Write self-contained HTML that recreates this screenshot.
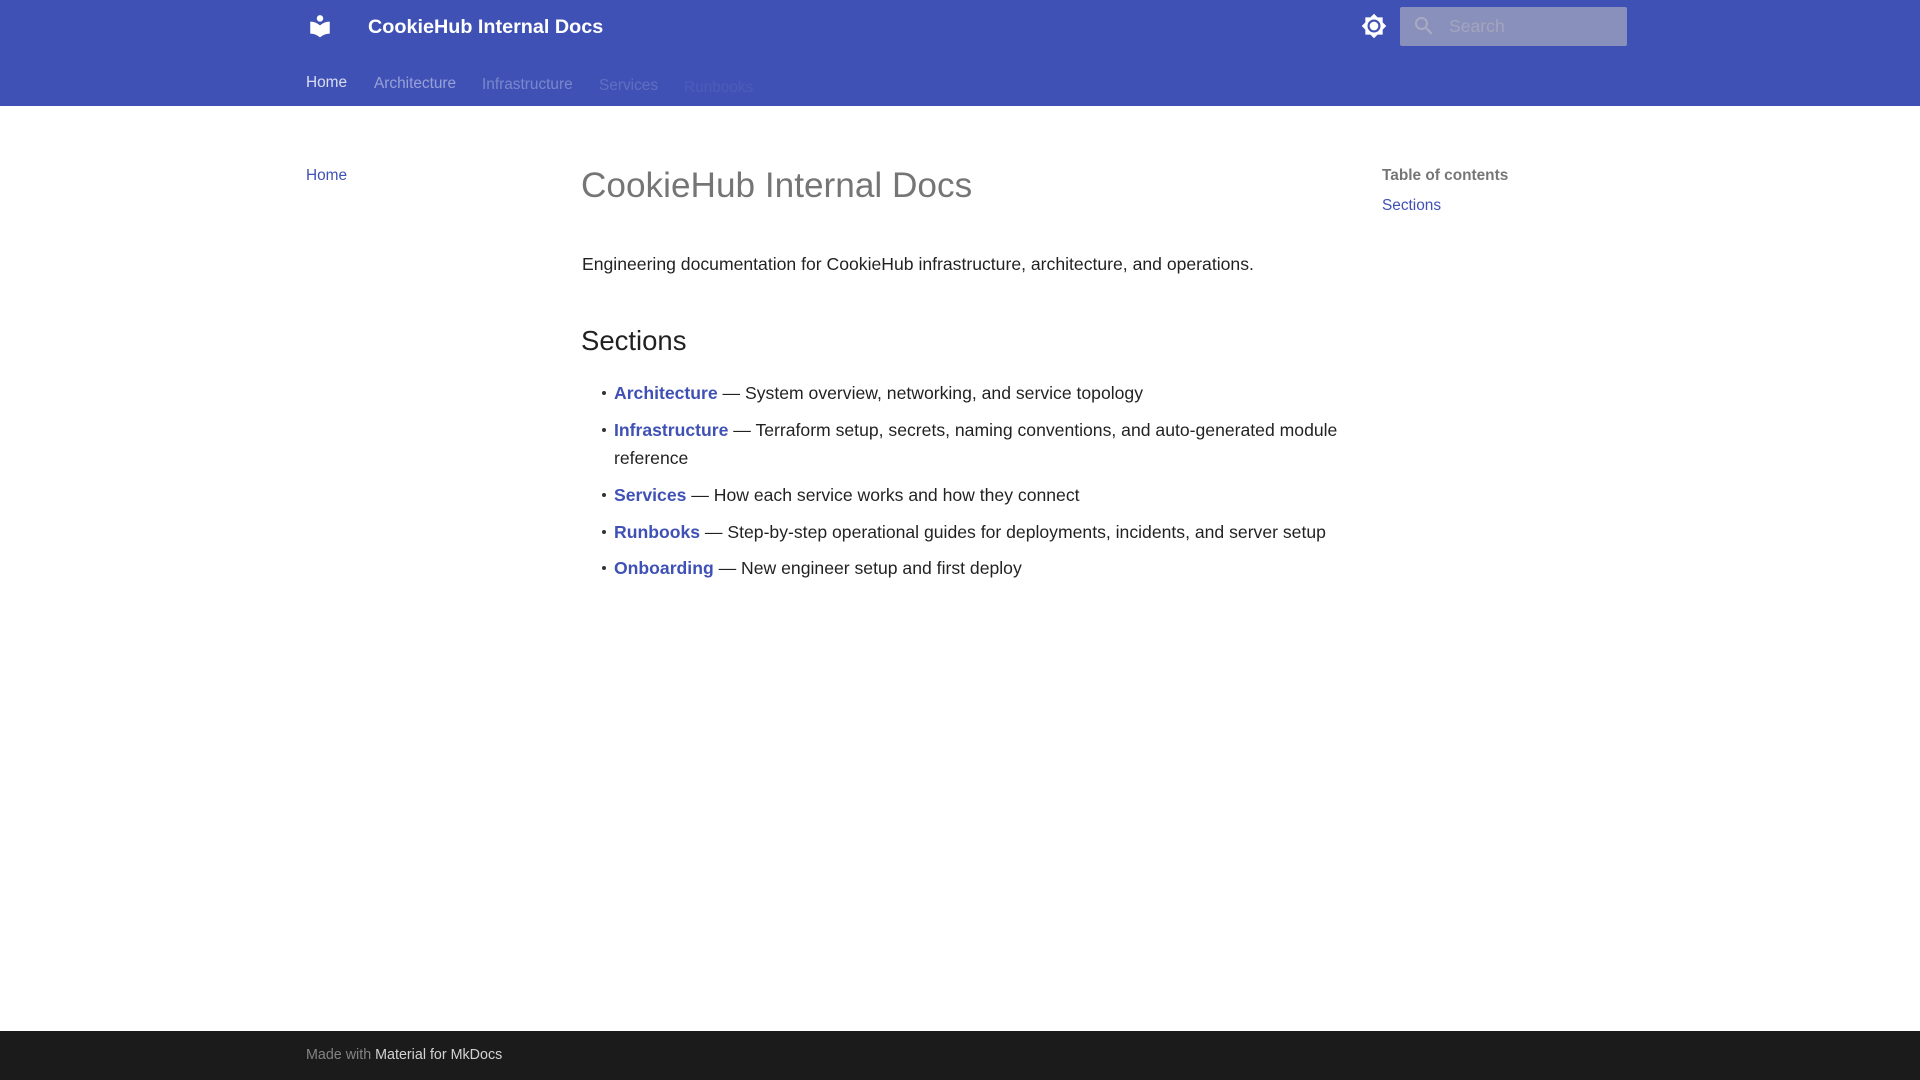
<!DOCTYPE html>
<html><head><meta charset="utf-8"><style>
*{margin:0;padding:0;box-sizing:border-box}
html,body{width:1920px;height:1080px;overflow:hidden;background:#fff;font-family:"Liberation Sans",Arial,sans-serif}
.a{position:absolute;white-space:nowrap}
.hdr{position:absolute;left:0;top:0;width:1920px;height:106px;background:#4051b5}
.tab{font-size:15.4px;color:#fff;line-height:20px}
.blue{color:#4051b5}
.li{font-size:17.6px;line-height:28px;color:rgba(0,0,0,.87)}
.li b{color:#4051b5}
.dot{position:absolute;width:4px;height:4px;border-radius:50%;background:#333;left:602px}
</style></head><body>
<div class="hdr"></div>
<svg class="a" style="left:307px;top:13px" width="26" height="26" viewBox="0 0 24 24"><path fill="#fff" d="M12 8a3 3 0 0 0 3-3 3 3 0 0 0-3-3 3 3 0 0 0-3 3 3 3 0 0 0 3 3m0 3.54C9.64 9.35 6.5 8 3 8v11c3.5 0 6.64 1.35 9 3.54 2.36-2.19 5.5-3.54 9-3.54V8c-3.5 0-6.64 1.35-9 3.54Z"/></svg>
<div class="a" style="left:368px;top:15px;font-size:19.8px;font-weight:bold;color:#fff;line-height:24px">CookieHub Internal Docs</div>
<div class="a tab" style="left:306px;top:73px;opacity:.8">Home</div>
<div class="a tab" style="left:374px;top:74px;opacity:.45">Architecture</div>
<div class="a tab" style="left:482px;top:75px;opacity:.3">Infrastructure</div>
<div class="a tab" style="left:599px;top:76px;opacity:.16">Services</div>
<div class="a tab" style="left:684px;top:78px;opacity:.06">Runbooks</div>
<svg class="a" style="left:1361px;top:13px" width="26" height="26" viewBox="0 0 24 24"><path fill="#fff" d="M12 8a4 4 0 0 0-4 4 4 4 0 0 0 4 4 4 4 0 0 0 4-4 4 4 0 0 0-4-4m0 10a6 6 0 0 1-6-6 6 6 0 0 1 6-6 6 6 0 0 1 6 6 6 6 0 0 1-6 6m8-9.31V4h-4.69L12 .69 8.69 4H4v4.69L.69 12 4 15.31V20h4.69L12 23.31 15.31 20H20v-4.69L23.31 12 20 8.69Z"/><circle cx="12" cy="12" r="2.6" fill="#fff"/></svg>
<div class="a" style="left:1400px;top:7px;width:227px;height:39px;background:#8990bb;border-radius:2px"></div>
<svg class="a" style="left:1412px;top:14px" width="24" height="24" viewBox="0 0 24 24"><path fill="#a9abc2" d="M9.5 3A6.5 6.5 0 0 1 16 9.5c0 1.61-.59 3.09-1.56 4.23l.27.27h.79l5 5-1.5 1.5-5-5v-.79l-.27-.27A6.516 6.516 0 0 1 9.5 16 6.5 6.5 0 0 1 3 9.5 6.5 6.5 0 0 1 9.5 3m0 2C7 5 5 7 5 9.5S7 14 9.5 14 14 12 14 9.5 12 5 9.5 5Z"/></svg>
<div class="a" style="left:1449px;top:14px;font-size:17.6px;line-height:24px;color:#a3a5bd">Search</div>

<div class="a blue" style="left:306px;top:166px;font-size:15.4px;line-height:20px">Home</div>
<div class="a" style="left:1382px;top:166px;font-size:15.4px;line-height:20px;font-weight:bold;color:rgba(0,0,0,.54)">Table of contents</div>
<div class="a blue" style="left:1382px;top:196px;font-size:15.4px;line-height:20px">Sections</div>

<div class="a" style="left:581px;top:165px;font-size:35.2px;line-height:42px;font-weight:300;color:rgba(0,0,0,.54)">CookieHub Internal Docs</div>
<div class="a li" style="left:582px;top:250px">Engineering documentation for CookieHub infrastructure, architecture, and operations.</div>
<div class="a" style="left:581px;top:324px;font-size:27.5px;line-height:34px;color:rgba(0,0,0,.87)">Sections</div>

<div class="dot" style="top:391px"></div><div class="a li" style="left:614px;top:379px"><b>Architecture</b> — System overview, networking, and service topology</div>
<div class="dot" style="top:428px"></div><div class="a li" style="left:614px;top:416px"><b>Infrastructure</b> — Terraform setup, secrets, naming conventions, and auto-generated module</div>
<div class="a li" style="left:614px;top:444px">reference</div>
<div class="dot" style="top:493px"></div><div class="a li" style="left:614px;top:481px"><b>Services</b> — How each service works and how they connect</div>
<div class="dot" style="top:530px"></div><div class="a li" style="left:614px;top:518px"><b>Runbooks</b> — Step-by-step operational guides for deployments, incidents, and server setup</div>
<div class="dot" style="top:566px"></div><div class="a li" style="left:614px;top:554px"><b>Onboarding</b> — New engineer setup and first deploy</div>

<div class="a" style="left:0;top:1031px;width:1920px;height:49px;background:#1b1b1b"></div>
<div class="a" style="left:306px;top:1045px;font-size:14.3px;line-height:20px;color:rgba(255,255,255,.45)">Made with <span style="color:rgba(255,255,255,.8)">Material for MkDocs</span></div>
</body></html>
